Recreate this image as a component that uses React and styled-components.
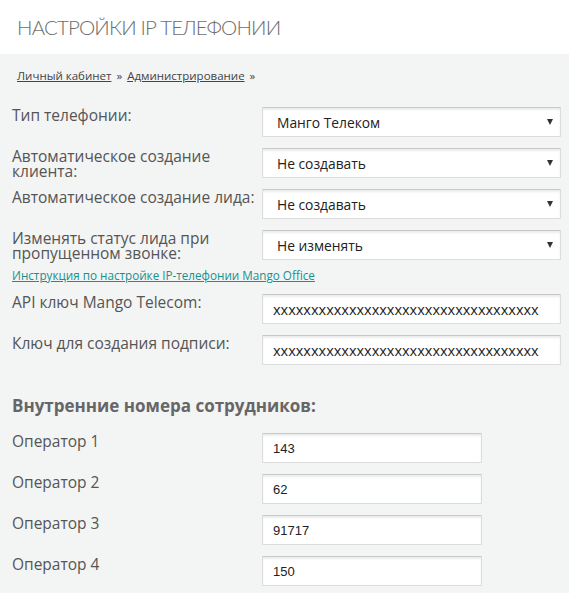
import React from "react";
import styled, { createGlobalStyle } from "styled-components";

const GlobalStyle = createGlobalStyle`
  html, body {
    margin: 0;
    padding: 0;
    background: #f3f4f4;
  }
  * {
    box-sizing: border-box;
  }
`;

const Page = styled.div`
  width: 569px;
  min-height: 593px;
  background: #f3f4f4;
  font-family: "Open Sans", "Noto Sans", sans-serif;
`;

const Header = styled.header`
  height: 54px;
  background: #ffffff;
  display: flex;
  align-items: center;
  padding-left: 17px;
`;

const Title = styled.h1`
  margin: 0;
  font-family: Lato, sans-serif;
  font-weight: 300;
  font-size: 20.5px;
  color: #6e6e6e;
  letter-spacing: -0.85px;
`;

const Breadcrumbs = styled.nav`
  padding: 14px 17px 0;
  font-size: 11.5px;
  line-height: 16px;
  color: #444;
  display: flex;
  gap: 5px;
`;

const Crumb = styled.a`
  color: #444;
  text-decoration: underline;
  cursor: pointer;
`;

const Form = styled.div`
  padding: 23px 8px 0 12px;
`;

const Row = styled.div`
  display: flex;
  align-items: flex-start;
  margin-bottom: 11px;
`;

const Label = styled.label`
  width: 250px;
  flex-shrink: 0;
  font-size: 15.5px;
  line-height: 15px;
  padding-top: 1px;
  margin-bottom: -1px;
  color: #555;
`;

const SelectWrap = styled.div`
  position: relative;
  width: 299px;
  &::after {
    content: "";
    position: absolute;
    right: 8px;
    top: 12px;
    border-left: 3.5px solid transparent;
    border-right: 3.5px solid transparent;
    border-top: 6px solid #333;
    pointer-events: none;
  }
`;

const fieldBase = `
  height: 30px;
  background: #fff;
  border: 1px solid #dcdcdc;
  border-top-color: #c8c8c8;
  box-shadow: inset 0 2px 2px rgba(0, 0, 0, 0.08);
  border-radius: 1px;
  outline: none;
  color: #222;
  margin: 0;
`;

const Select = styled.select`
  ${fieldBase}
  width: 100%;
  appearance: none;
  -webkit-appearance: none;
  padding: 0 0 0 14px;
  font-size: 13.8px;
  font-family: "Open Sans", "Noto Sans", sans-serif;
`;

const TextInput = styled.input`
  ${fieldBase}
  width: ${(p) => p.$width}px;
  padding: 0 0 0 10px;
  font-size: ${(p) => (p.$keys ? 14.5 : 13)}px;
  font-family: ${(p) =>
    p.$keys ? '"Open Sans", sans-serif' : '"Liberation Sans", Arial, sans-serif'};
`;

const HelpLink = styled.a`
  display: block;
  font-size: 11.7px;
  line-height: 16px;
  color: #17918f;
  text-decoration: underline;
  margin: -4px 0 11px;
  cursor: pointer;
`;

const SectionTitle = styled.h2`
  margin: 31px 0 17px;
  font-size: 17px;
  font-weight: 700;
  color: #666;
  line-height: 20px;
`;

const selects = [
  { label: "Тип телефонии:", value: "Манго Телеком" },
  { label: "Автоматическое создание клиента:", value: "Не создавать" },
  { label: "Автоматическое создание лида:", value: "Не создавать" },
  { label: "Изменять статус лида при пропущенном звонке:", value: "Не изменять" },
];

const keys = "x".repeat(35);

const operators = [
  { name: "Оператор 1", num: "143" },
  { name: "Оператор 2", num: "62" },
  { name: "Оператор 3", num: "91717" },
  { name: "Оператор 4", num: "150" },
];

export default function App() {
  return (
    <Page>
      <GlobalStyle />
      <Header>
        <Title>НАСТРОЙКИ IP ТЕЛЕФОНИИ</Title>
      </Header>
      <Breadcrumbs>
        <Crumb>Личный кабинет</Crumb>
        <span>»</span>
        <Crumb>Администрирование</Crumb>
        <span>»</span>
      </Breadcrumbs>
      <Form>
        {selects.map((s, i) => (
          <Row key={i}>
            <Label>{s.label}</Label>
            <SelectWrap>
              <Select defaultValue={s.value}>
                <option>{s.value}</option>
              </Select>
            </SelectWrap>
          </Row>
        ))}
        <HelpLink>Инструкция по настройке IP-телефонии Mango Office</HelpLink>
        <Row>
          <Label>API ключ Mango Telecom:</Label>
          <TextInput $width={299} $keys defaultValue={keys} />
        </Row>
        <Row>
          <Label>Ключ для создания подписи:</Label>
          <TextInput $width={299} $keys defaultValue={keys} />
        </Row>
        <SectionTitle>Внутренние номера сотрудников:</SectionTitle>
        {operators.map((o) => (
          <Row key={o.name}>
            <Label>{o.name}</Label>
            <TextInput $width={220} defaultValue={o.num} />
          </Row>
        ))}
      </Form>
    </Page>
  );
}
